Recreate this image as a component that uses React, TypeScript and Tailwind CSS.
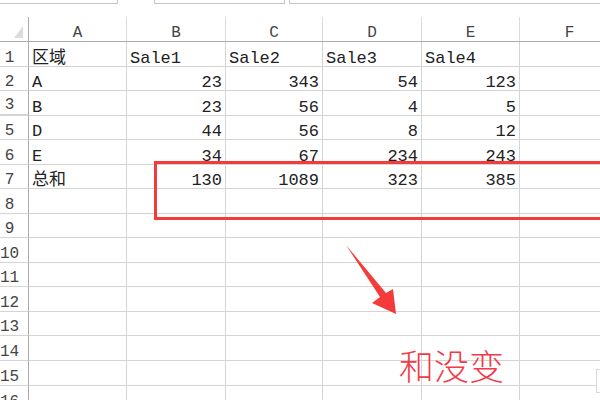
import React from "react";

type Row = { n: string; h: string; c?: string[]; t?: boolean; hid?: boolean };

const rows: Row[] = [
  { n: "1", h: "h-[25px]", c: ["区域", "Sale1", "Sale2", "Sale3", "Sale4", ""], t: true },
  { n: "2", h: "h-[24px]", c: ["A", "23", "343", "54", "123", ""] },
  { n: "3", h: "h-[25px]", c: ["B", "23", "56", "4", "5", ""], hid: true },
  { n: "5", h: "h-[24px]", c: ["D", "44", "56", "8", "12", ""] },
  { n: "6", h: "h-[25px]", c: ["E", "34", "67", "234", "243", ""] },
  { n: "7", h: "h-[24px]", c: ["总和", "130", "1089", "323", "385", ""] },
  { n: "8", h: "h-[25px]" },
  { n: "9", h: "h-[24px]" },
  { n: "10", h: "h-[25px]" },
  { n: "11", h: "h-[24px]" },
  { n: "12", h: "h-[25px]" },
  { n: "13", h: "h-[24px]" },
  { n: "14", h: "h-[25px]" },
  { n: "15", h: "h-[25px]" },
  { n: "16", h: "h-[25px]" },
];

const colW = ["w-[98px]", "w-[99px]", "w-[97px]", "w-[99px]", "w-[98px]", "w-[100px]"];
const letters = ["A", "B", "C", "D", "E", "F"];

export default function App() {
  return (
    <div className="relative w-[600px] h-[400px] overflow-hidden bg-white font-['Liberation_Mono','Noto_Sans_CJK_SC',monospace] text-[17px] text-[#222]">
      {/* top toolbar remnants */}
      <div className="flex h-[17px] items-start">
        <div className="w-[118px] h-[4px] border-b border-r border-[#c4c4c4] shrink-0" />
        <div className="w-[36px] shrink-0" />
        <div className="w-[131px] h-[4px] border-b border-l border-r border-[#c4c4c4] shrink-0" />
        <div className="w-[4px] shrink-0" />
        <div className="flex-1 h-[4px] border-b border-l border-[#c4c4c4]" />
      </div>

      {/* column header */}
      <div className="flex h-[25px] border-b border-[#ababab]">
        <div className="w-[29px] shrink-0 border-r border-[#ababab] flex items-end justify-end pr-[5px] pb-[3px]">
          <svg width="9" height="13" viewBox="0 0 9 13">
            <polygon points="0,13 9,13 9,1" fill="#dcdcdc" />
          </svg>
        </div>
        {letters.map((l, i) => (
          <div
            key={l}
            className={`${colW[i]} shrink-0 border-r border-[#dadada] flex items-end justify-center text-[16px] leading-[15px] text-[#444]`}
          >
            {l}
          </div>
        ))}
      </div>

      {/* rows */}
      {rows.map((r) => (
        <div key={r.n} className={`flex ${r.h}`}>
          <div className="w-[29px] shrink-0 border-r border-b border-[#ababab] border-b-[#d4d4d4] flex flex-col justify-end">
            <div className="w-[19px] text-center text-[16px] leading-[15px] text-[#444]">{r.n}</div>
            {r.hid ? <div className="h-[2px] mt-[0px] border-b border-[#d4d4d4]" /> : null}
          </div>
          {colW.map((w, i) => {
            const v = r.c ? r.c[i] : "";
            const left = i === 0 || r.t;
            return (
              <div
                key={i}
                className={`${w} shrink-0 border-r border-b border-[#d4d4d4] flex items-end ${left ? "justify-start pl-[3px]" : "justify-end pr-[3px]"} leading-[15px] whitespace-nowrap`}
              >
                {v}
              </div>
            );
          })}
        </div>
      ))}

      {/* red annotation rectangle */}
      <div className="absolute left-[154px] top-[161px] w-[460px] h-[59px] border-[3px] border-[#f43b3b]" />

      {/* arrow */}
      <svg className="absolute left-0 top-0" width="600" height="400" viewBox="0 0 600 400">
        <polygon
          points="346,245 386,293 393,289 396,314 372,303 380,297"
          fill="#f43b3b"
        />
      </svg>

      {/* red text */}
      <div className="absolute left-[399px] top-[347px] text-[35px] leading-none text-[#f23a48] font-['Noto_Sans_CJK_SC',sans-serif] font-light whitespace-nowrap">
        和没变
      </div>

      {/* small box bottom right */}
      <div className="absolute left-[596px] top-[369px] w-[10px] h-[24px] border border-[#d8d8d8] bg-white" />
    </div>
  );
}
